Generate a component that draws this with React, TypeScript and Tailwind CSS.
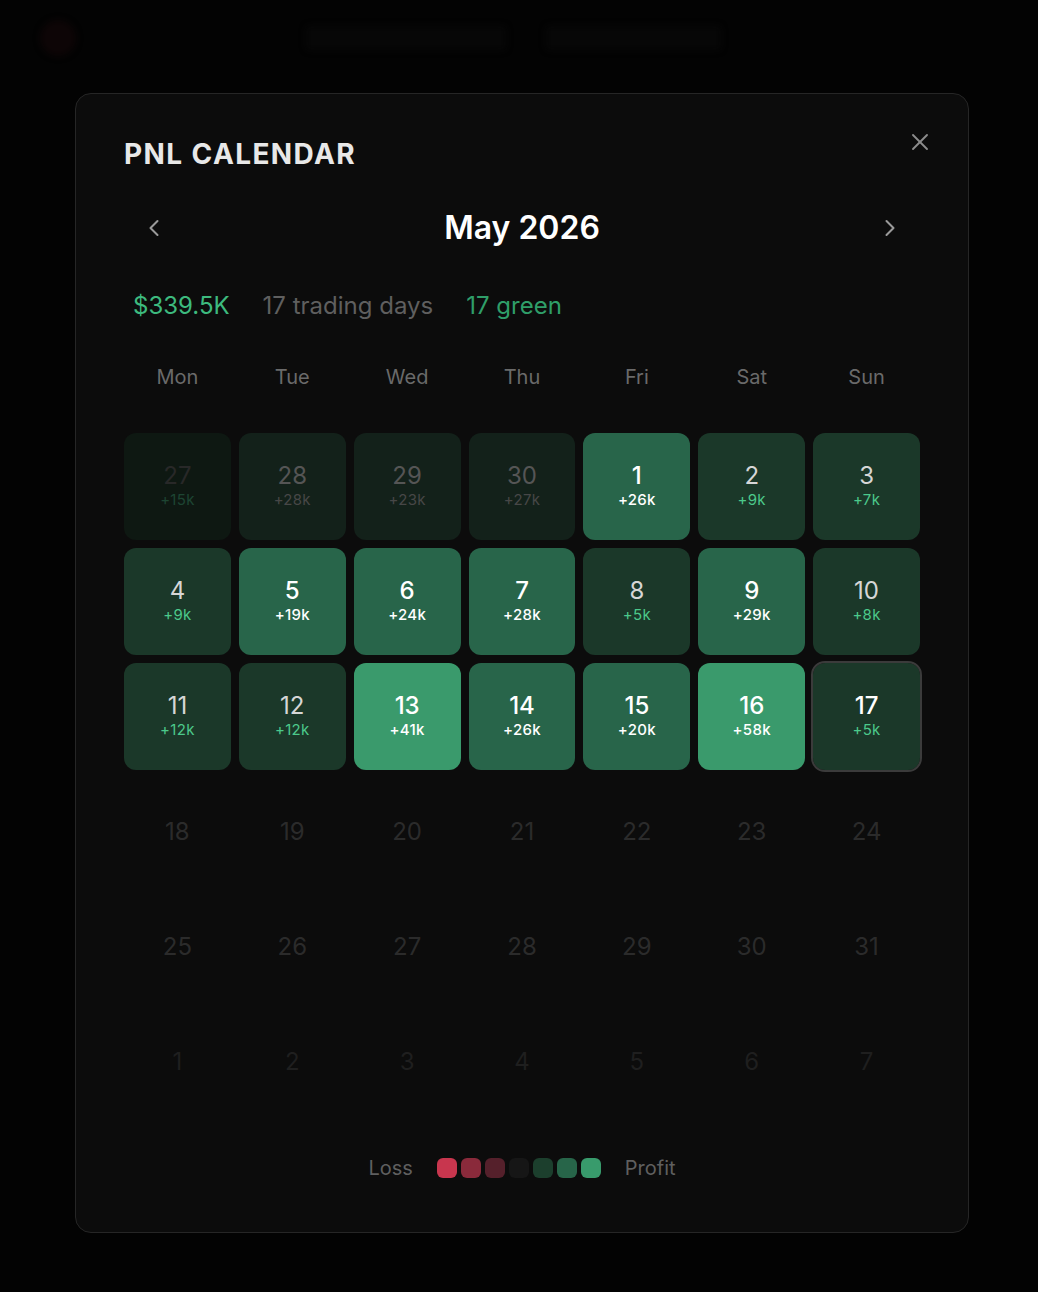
import { ChevronLeft, ChevronRight, X } from "lucide-react";

type Tone = "prevFaint" | "prev" | "l1" | "l2" | "l3" | "empty" | "next";

interface Day {
  day: number;
  pnl?: string;
  tone: Tone;
  today?: boolean;
}

const toneClasses: Record<Tone, { cell: string; num: string; pnl: string }> = {
  prevFaint: { cell: "bg-[#0e1812]", num: "text-[#282828] font-normal", pnl: "text-[#1d4532]" },
  prev: { cell: "bg-[#13211a]", num: "text-[#555555] font-normal", pnl: "text-[#474747]" },
  l1: { cell: "bg-[#1b3829]", num: "text-[#d6d6d6] font-normal", pnl: "text-[#4cc98b]" },
  l2: { cell: "bg-[#28654a]", num: "text-white font-medium", pnl: "text-white font-medium" },
  l3: { cell: "bg-[#3a9a6c]", num: "text-white font-medium", pnl: "text-white font-medium" },
  empty: { cell: "", num: "text-[#2b2b2b] font-normal", pnl: "" },
  next: { cell: "", num: "text-[#1f1f1f] font-normal", pnl: "" },
};

const days: Day[] = [
  { day: 27, pnl: "+15k", tone: "prevFaint" },
  { day: 28, pnl: "+28k", tone: "prev" },
  { day: 29, pnl: "+23k", tone: "prev" },
  { day: 30, pnl: "+27k", tone: "prev" },
  { day: 1, pnl: "+26k", tone: "l2" },
  { day: 2, pnl: "+9k", tone: "l1" },
  { day: 3, pnl: "+7k", tone: "l1" },
  { day: 4, pnl: "+9k", tone: "l1" },
  { day: 5, pnl: "+19k", tone: "l2" },
  { day: 6, pnl: "+24k", tone: "l2" },
  { day: 7, pnl: "+28k", tone: "l2" },
  { day: 8, pnl: "+5k", tone: "l1" },
  { day: 9, pnl: "+29k", tone: "l2" },
  { day: 10, pnl: "+8k", tone: "l1" },
  { day: 11, pnl: "+12k", tone: "l1" },
  { day: 12, pnl: "+12k", tone: "l1" },
  { day: 13, pnl: "+41k", tone: "l3" },
  { day: 14, pnl: "+26k", tone: "l2" },
  { day: 15, pnl: "+20k", tone: "l2" },
  { day: 16, pnl: "+58k", tone: "l3" },
  { day: 17, pnl: "+5k", tone: "l1", today: true },
  ...Array.from({ length: 14 }, (_, i) => ({ day: 18 + i, tone: "empty" as Tone })),
  ...Array.from({ length: 7 }, (_, i) => ({ day: 1 + i, tone: "next" as Tone })),
];

const weekdays = ["Mon", "Tue", "Wed", "Thu", "Fri", "Sat", "Sun"];

const legend = ["bg-[#c8364e]", "bg-[#8a2a3b]", "bg-[#55202b]", "bg-[#161616]", "bg-[#1c3f2d]", "bg-[#276549]", "bg-[#389b6c]"];

export default function App() {
  return (
    <div
      className="relative h-[1292px] w-full overflow-hidden bg-[#030303]"
      style={{ fontFamily: "Inter, 'Noto Sans', sans-serif" }}
    >
      {/* blurred page behind the dialog */}
      <div className="flex items-center gap-10 px-[40px] pt-[20px] blur-[3px]">
        <div className="h-9 w-9 rounded-full bg-[#0d0506]" />
        <div className="ml-[190px] h-6 w-[200px] rounded bg-[#070707]" />
        <div className="h-6 w-[175px] rounded bg-[#070707]" />
      </div>

      {/* overlay */}
      <div className="absolute inset-0 flex items-start pl-[75px] pt-[93px]">
        <div className="relative flex h-[1140px] w-[894px] flex-col rounded-2xl border border-[#262626] bg-[#0c0c0c] px-12 pt-[42px]">
          <button
            type="button"
            className="absolute right-[34px] top-[34px] text-[#8c8c8c]"
            aria-label="Close"
          >
            <X className="h-7 w-7" strokeWidth={1.6} />
          </button>

          <h2 className="text-[28px] font-bold leading-9 tracking-[0.05em] text-[#e8e8e8]">
            PNL CALENDAR
          </h2>

          <div className="mt-9 flex h-10 items-center justify-between px-2.5">
            <button type="button" className="flex h-10 w-10 items-center justify-center text-[#9a9a9a]">
              <ChevronLeft className="h-7 w-7" strokeWidth={1.75} />
            </button>
            <div className="text-[32px] font-semibold text-white">May 2026</div>
            <button type="button" className="flex h-10 w-10 items-center justify-center text-[#9a9a9a]">
              <ChevronRight className="h-7 w-7" strokeWidth={1.75} />
            </button>
          </div>

          <div className="mt-[42px] flex items-center gap-[33px] pl-[9px] text-[24px] leading-8">
            <span className="text-[#3dba7e]">$339.5K</span>
            <span className="text-[#5f5f5f]">17 trading days</span>
            <span className="text-[#2f9e69]">17 green</span>
          </div>

          <div className="mt-[41px] grid grid-cols-7 gap-2 text-center text-[20px] leading-7 text-[#6a6a6a]">
            {weekdays.map((d) => (
              <div key={d}>{d}</div>
            ))}
          </div>

          <div className="mt-[42px] grid grid-cols-7 gap-2">
            {days.map((d, i) => {
              const t = toneClasses[d.tone];
              return (
                <div
                  key={i}
                  className={`flex h-[107px] flex-col items-center justify-center rounded-xl ${t.cell} ${
                    d.today ? "outline-2 outline-offset-0 outline-[#3b3b3b]" : ""
                  }`}
                >
                  <span className={`text-[24px] leading-[26px] ${d.today ? "text-white font-medium" : t.num}`}>
                    {d.day}
                  </span>
                  {d.pnl && (
                    <span className={`mt-[1px] text-[15px] leading-5 tracking-[0.02em] ${t.pnl}`}>{d.pnl}</span>
                  )}
                </div>
              );
            })}
          </div>

          <div className="mt-[41px] flex items-center justify-center gap-6 text-[20px] leading-6 text-[#5f5f5f]">
            <span>Loss</span>
            <div className="flex gap-1">
              {legend.map((c) => (
                <div key={c} className={`h-5 w-5 rounded-md ${c}`} />
              ))}
            </div>
            <span>Profit</span>
          </div>
        </div>
      </div>
    </div>
  );
}
